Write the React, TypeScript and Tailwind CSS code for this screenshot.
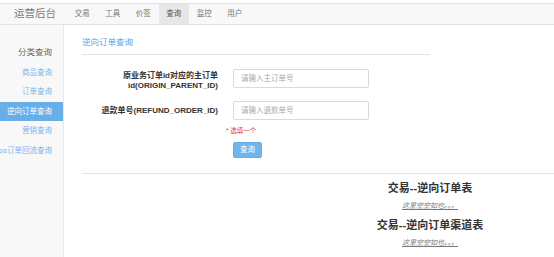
const NAV = ["交易", "工具", "价签", "查询", "监控", "用户"];
const SIDE = ["商品查询", "订单查询", "逆向订单查询", "营销查询", "os订单回流查询"];

export default function App() {
  return (
    <div className="h-[257px] w-[554px] overflow-hidden bg-white pt-[3px] font-['Liberation_Sans','Noto_Sans_CJK_SC',sans-serif] text-[#333]">
      <TopBar />
      <div className="flex h-[232px]">
        <Sidebar />
        <main className="flex-1 overflow-hidden">
          <div className="ml-[18px] w-[696px]">
            <QueryForm />
            <div className="mt-[15px] border-t border-[#e5e5e5]" />
            <ResultBlock title="交易--逆向订单表" />
            <ResultBlock title="交易--逆向订单渠道表" />
          </div>
        </main>
      </div>
    </div>
  );
}

function TopBar() {
  return (
    <header className="flex h-[22px] items-stretch border-y border-[#e3e3e3] bg-[#f8f8f8]">
      <div className="flex w-[67px] items-center pl-[14px] text-[10.5px] text-[#777]">运营后台</div>
      <nav className="flex">
        {NAV.map((n) => (
          <div
            key={n}
            className={
              n === "查询"
                ? "flex w-[30.5px] items-center justify-center bg-[#e7e7e7] text-[7.5px] text-[#555]"
                : "flex w-[30.5px] items-center justify-center text-[7.5px] text-[#777]"
            }
          >
            {n}
          </div>
        ))}
      </nav>
    </header>
  );
}

function Sidebar() {
  return (
    <aside className="w-[64px] shrink-0 overflow-hidden border-r border-[#e7e7e7] bg-[#f8f8f8]">
      <div className="mt-[18px] flex h-[19.5px] items-center justify-end pr-[11px] text-[8.5px] text-[#666]">
        分类查询
      </div>
      {SIDE.map((s) => (
        <div
          key={s}
          className={
            s === "逆向订单查询"
              ? "flex h-[19.5px] items-center justify-end whitespace-nowrap bg-[#6aaee8] pr-[11px] text-[7.5px] text-white"
              : "flex h-[19.5px] items-center justify-end whitespace-nowrap pr-[11px] text-[7.5px] text-[#7db6ea]"
          }
        >
          {s}
        </div>
      ))}
    </aside>
  );
}

function QueryForm() {
  return (
    <div className="w-[348px]">
      <h2 className="pt-[11px] text-[8.5px] leading-[12px] text-[#5ba3e3]">逆向订单查询</h2>
      <div className="mt-[6px] border-t border-[#e5e5e5]" />
      <div className="mt-[14px] flex gap-[15px]">
        <label className="w-[136px] pt-[2px] text-right text-[8px] font-bold leading-[10px]">
          原业务订单id对应的主订单
          <br />
          id(ORIGIN_PARENT_ID)
        </label>
        <Input placeholder="请输入主订单号" />
      </div>
      <div className="mt-[10px] flex gap-[15px]">
        <label className="w-[136px] pt-[5px] text-right text-[8px] font-bold leading-[10px]">
          退款单号(REFUND_ORDER_ID)
        </label>
        <Input placeholder="请输入退款单号" />
      </div>
      <div className="mt-[6px] pl-[144px] text-[6.5px] leading-[10px] text-[#e4393c]">* 选填一个</div>
      <div className="mt-[6px] flex pl-[151px]">
        <button
          type="button"
          className="h-[16px] w-[29px] rounded-[2px] border border-[#65aee6] bg-[#72b5ea] text-[7.5px] leading-[14px] text-white"
        >
          查询
        </button>
      </div>
    </div>
  );
}

function Input({ placeholder }: { placeholder: string }) {
  return (
    <input
      placeholder={placeholder}
      className="h-[19px] w-[136px] rounded-[2px] border border-[#d9d9d9] bg-white px-[7px] text-[7.5px] outline-none placeholder:text-[#aaa]"
    />
  );
}

function ResultBlock({ title }: { title: string }) {
  return (
    <div className="text-center">
      <h3 className="mt-[7px] text-[11px] font-bold leading-[15px] text-[#333]">{title}</h3>
      <p className="mt-[5px] text-[7px] italic leading-[10px] text-[#777] underline">这里空空如也。。。</p>
    </div>
  );
}
